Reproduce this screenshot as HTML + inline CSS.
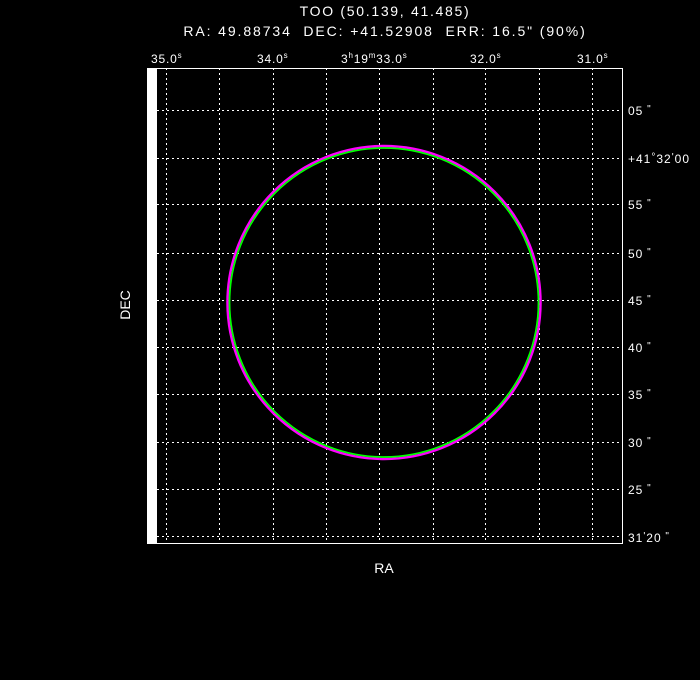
<!DOCTYPE html>
<html><head><style>
html,body{margin:0;padding:0;background:#000;width:700px;height:680px;overflow:hidden}
svg text{font-family:"Liberation Sans",sans-serif;fill:#fff;white-space:pre}
</style></head><body>
<svg width="700" height="680" viewBox="0 0 700 680" xmlns="http://www.w3.org/2000/svg" xml:space="preserve">
<rect width="700" height="680" fill="#000"/>
<text x="385" y="16" font-size="14" text-anchor="middle" letter-spacing="1.7">TOO (50.139, 41.485)</text>
<text x="385" y="36" font-size="14" text-anchor="middle" letter-spacing="1.9">RA: 49.88734  DEC: +41.52908  ERR: 16.5" (90%)</text>
<g font-size="12" letter-spacing="0.8">
<text x="151" y="63">35.0<tspan font-size="8" dy="-5">s</tspan></text>
<text x="257" y="63">34.0<tspan font-size="8" dy="-5">s</tspan></text>
<text x="341" y="63">3<tspan font-size="8" dy="-5">h</tspan><tspan dy="5">19</tspan><tspan font-size="8" dy="-5">m</tspan><tspan dy="5">33.0</tspan><tspan font-size="8" dy="-5">s</tspan></text>
<text x="470" y="63">32.0<tspan font-size="8" dy="-5">s</tspan></text>
<text x="577" y="63">31.0<tspan font-size="8" dy="-5">s</tspan></text>
</g>
<g stroke="#fff" stroke-width="1" stroke-dasharray="2,3" fill="none">
<path d="M166.5 68V543M219.5 68V543M273.5 68V543M326.5 68V543M379.5 68V543M433.5 68V543M485.5 68V543M539.5 68V543M592.5 68V543"/>
<path d="M157 110.5H622M157 158.5H622M157 204.5H622M157 253.5H622M157 300.5H622M157 347.5H622M157 394.5H622M157 442.5H622M157 489.5H622M157 536.5H622"/>
</g>
<rect x="147.5" y="68.5" width="475" height="475" fill="none" stroke="#fff"/>
<rect x="147" y="68" width="10" height="476" fill="#fff"/>
<circle cx="384" cy="302.5" r="156.5" fill="none" stroke="#ff00ff" stroke-width="2.5"/>
<circle cx="384" cy="302.5" r="154.5" fill="none" stroke="#00ff00" stroke-width="1.8"/>
<g font-size="12" letter-spacing="1">
<text x="628" y="115">05<tspan font-size="10" dy="-3"> "</tspan></text>
<text x="628" y="163">+41<tspan font-size="10" dy="-3">°</tspan><tspan dy="3">32</tspan><tspan font-size="10" dy="-3">'</tspan><tspan dy="3">00</tspan></text>
<text x="628" y="209">55<tspan font-size="10" dy="-3"> "</tspan></text>
<text x="628" y="258">50<tspan font-size="10" dy="-3"> "</tspan></text>
<text x="628" y="305">45<tspan font-size="10" dy="-3"> "</tspan></text>
<text x="628" y="352">40<tspan font-size="10" dy="-3"> "</tspan></text>
<text x="628" y="399">35<tspan font-size="10" dy="-3"> "</tspan></text>
<text x="628" y="447">30<tspan font-size="10" dy="-3"> "</tspan></text>
<text x="628" y="494">25<tspan font-size="10" dy="-3"> "</tspan></text>
<text x="628" y="542">31<tspan font-size="10" dy="-3">'</tspan><tspan dy="3">20</tspan><tspan font-size="10" dy="-3"> "</tspan></text>
</g>
<text x="384" y="573" font-size="14" text-anchor="middle">RA</text>
<text x="0" y="0" font-size="14" text-anchor="middle" transform="translate(130,305) rotate(-90)">DEC</text>
</svg>
</body></html>
